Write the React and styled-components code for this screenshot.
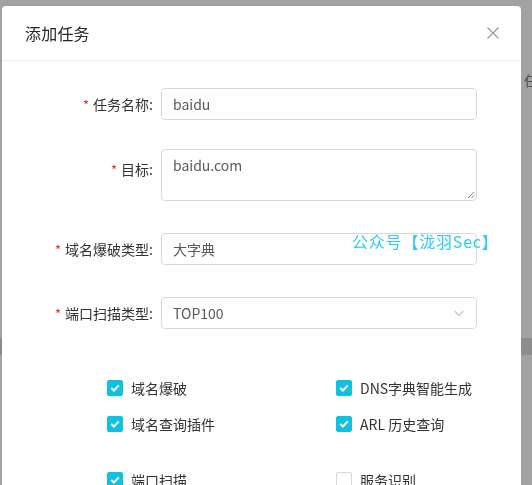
import React from 'react';
import styled, { createGlobalStyle } from 'styled-components';

const GlobalStyle = createGlobalStyle`
  html, body {
    margin: 0;
    padding: 0;
    height: 100%;
    overflow: hidden;
    background: #a2a2a2;
    font-family: "Noto Sans CJK SC", "Noto Sans", sans-serif;
  }
`;

// the page behind the modal mask
const Behind = styled.div`
  height: 485px;
  display: flex;
  flex-direction: column;
`;

const BehindText = styled.div`
  margin-top: 70px;
  align-self: flex-end;
  margin-right: -6px;
  font-size: 14px;
  line-height: 20px;
  color: #4a4a4a;
`;

const BehindBand = styled.div`
  margin-top: 248px;
  height: 17px;
  background: #8c8c8c;
`;

const Modal = styled.div`
  position: fixed;
  top: 6px;
  left: 2px;
  width: 519px;
  height: 520px;
  background: #fff;
  border-radius: 4px;
  overflow: hidden;
`;

const Header = styled.div`
  height: 54px;
  padding: 0 23px;
  display: flex;
  align-items: center;
  justify-content: space-between;
  border-bottom: 1px solid #ececec;
`;

const Title = styled.div`
  font-size: 16px;
  color: #262626;
  letter-spacing: 0.2px;
`;

const Close = styled.div`
  width: 14px;
  height: 14px;
  margin-right: -2px;
  display: flex;
  color: #9a9a9a;
`;

const Body = styled.div`
  padding-top: 27px;
  position: relative;
`;

const Row = styled.div`
  display: grid;
  grid-template-columns: 159px 316px;
  align-items: start;
  margin-bottom: ${(p) => p.$mb ?? 32}px;
`;

const Label = styled.label`
  display: flex;
  align-items: center;
  justify-content: flex-end;
  height: 32px;
  padding-right: 8px;
  font-size: 14px;
  color: #333;
  margin-top: ${(p) => p.$top || 0}px;
`;

const Star = styled.span`
  color: #f5222d;
  margin-right: 4px;
  font-size: 13px;
`;

const Field = styled.div`
  box-sizing: border-box;
  height: ${(p) => p.$h || 32}px;
  border: 1px solid #d9d9d9;
  border-radius: 4px;
  padding: ${(p) => (p.$area ? '4px 11px' : '0 11px')};
  display: flex;
  align-items: ${(p) => (p.$area ? 'flex-start' : 'center')};
  justify-content: space-between;
  font-size: 14px;
  line-height: 22px;
  color: #595959;
  position: relative;
`;

const Grip = styled.svg`
  position: absolute;
  right: 1px;
  bottom: 1px;
`;

const Watermark = styled.div`
  position: absolute;
  left: 350px;
  top: 168px;
  font-size: 16px;
  line-height: 24px;
  color: #2ccdf3;
  letter-spacing: 0.8px;
  pointer-events: none;
`;

const Checks = styled.div`
  display: grid;
  grid-template-columns: 229px auto;
  grid-template-rows: 22px 22px 6px 22px;
  padding-left: 105px;
  margin-top: 48px;
  row-gap: 14px;
`;

const Spacer = styled.div`
  grid-column: 1 / span 2;
`;

const CheckItem = styled.div`
  display: flex;
  align-items: center;
  height: 22px;
  font-size: 14px;
  line-height: 22px;
  color: #333;
`;

const Box = styled.span`
  box-sizing: border-box;
  width: 16px;
  height: 16px;
  border-radius: 2px;
  margin-right: 8px;
  display: flex;
  align-items: center;
  justify-content: center;
  background: ${(p) => (p.$on ? '#0fc1de' : '#fff')};
  border: 1px solid ${(p) => (p.$on ? '#0fc1de' : '#d9d9d9')};
`;

const Check = ({ on, children }) => (
  <CheckItem>
    <Box $on={on}>
      {on && (
        <svg width="10" height="8" viewBox="0 0 10 8">
          <path d="M1.2 4 L3.9 6.5 L8.8 1.4" fill="none" stroke="#fff" strokeWidth="2" />
        </svg>
      )}
    </Box>
    {children}
  </CheckItem>
);

export default function App() {
  return (
    <>
      <GlobalStyle />
      <Behind>
        <BehindText>任</BehindText>
        <BehindBand />
      </Behind>
      <Modal>
        <Header>
          <Title>添加任务</Title>
          <Close>
            <svg width="14" height="14" viewBox="0 0 14 14">
              <path d="M1.5 1.5 L12.5 12.5 M12.5 1.5 L1.5 12.5" stroke="currentColor" strokeWidth="1.2" />
            </svg>
          </Close>
        </Header>
        <Body>
          <Row $mb={29}>
            <Label><Star>*</Star>任务名称:</Label>
            <Field>baidu</Field>
          </Row>
          <Row>
            <Label $top={4}><Star>*</Star>目标:</Label>
            <Field $area $h={52}>
              baidu.com
              <Grip width="9" height="9" viewBox="0 0 9 9">
                <path d="M8 2 L2 8 M8 5.5 L5.5 8" stroke="#777" strokeWidth="0.9" />
              </Grip>
            </Field>
          </Row>
          <Row>
            <Label><Star>*</Star>域名爆破类型:</Label>
            <Field>大字典</Field>
          </Row>
          <Row $mb={0}>
            <Label><Star>*</Star>端口扫描类型:</Label>
            <Field>
              TOP100
              <svg width="12" height="12" viewBox="0 0 12 12">
                <path d="M1.5 4 L6 8.5 L10.5 4" fill="none" stroke="#c4c4c4" strokeWidth="1.1" />
              </svg>
            </Field>
          </Row>
          <Watermark>公众号【泷羽Sec】</Watermark>
          <Checks>
            <Check on>域名爆破</Check>
            <Check on>DNS字典智能生成</Check>
            <Check on>域名查询插件</Check>
            <Check on>ARL 历史查询</Check>
            <Spacer />
            <Check on>端口扫描</Check>
            <Check>服务识别</Check>
          </Checks>
        </Body>
      </Modal>
    </>
  );
}
